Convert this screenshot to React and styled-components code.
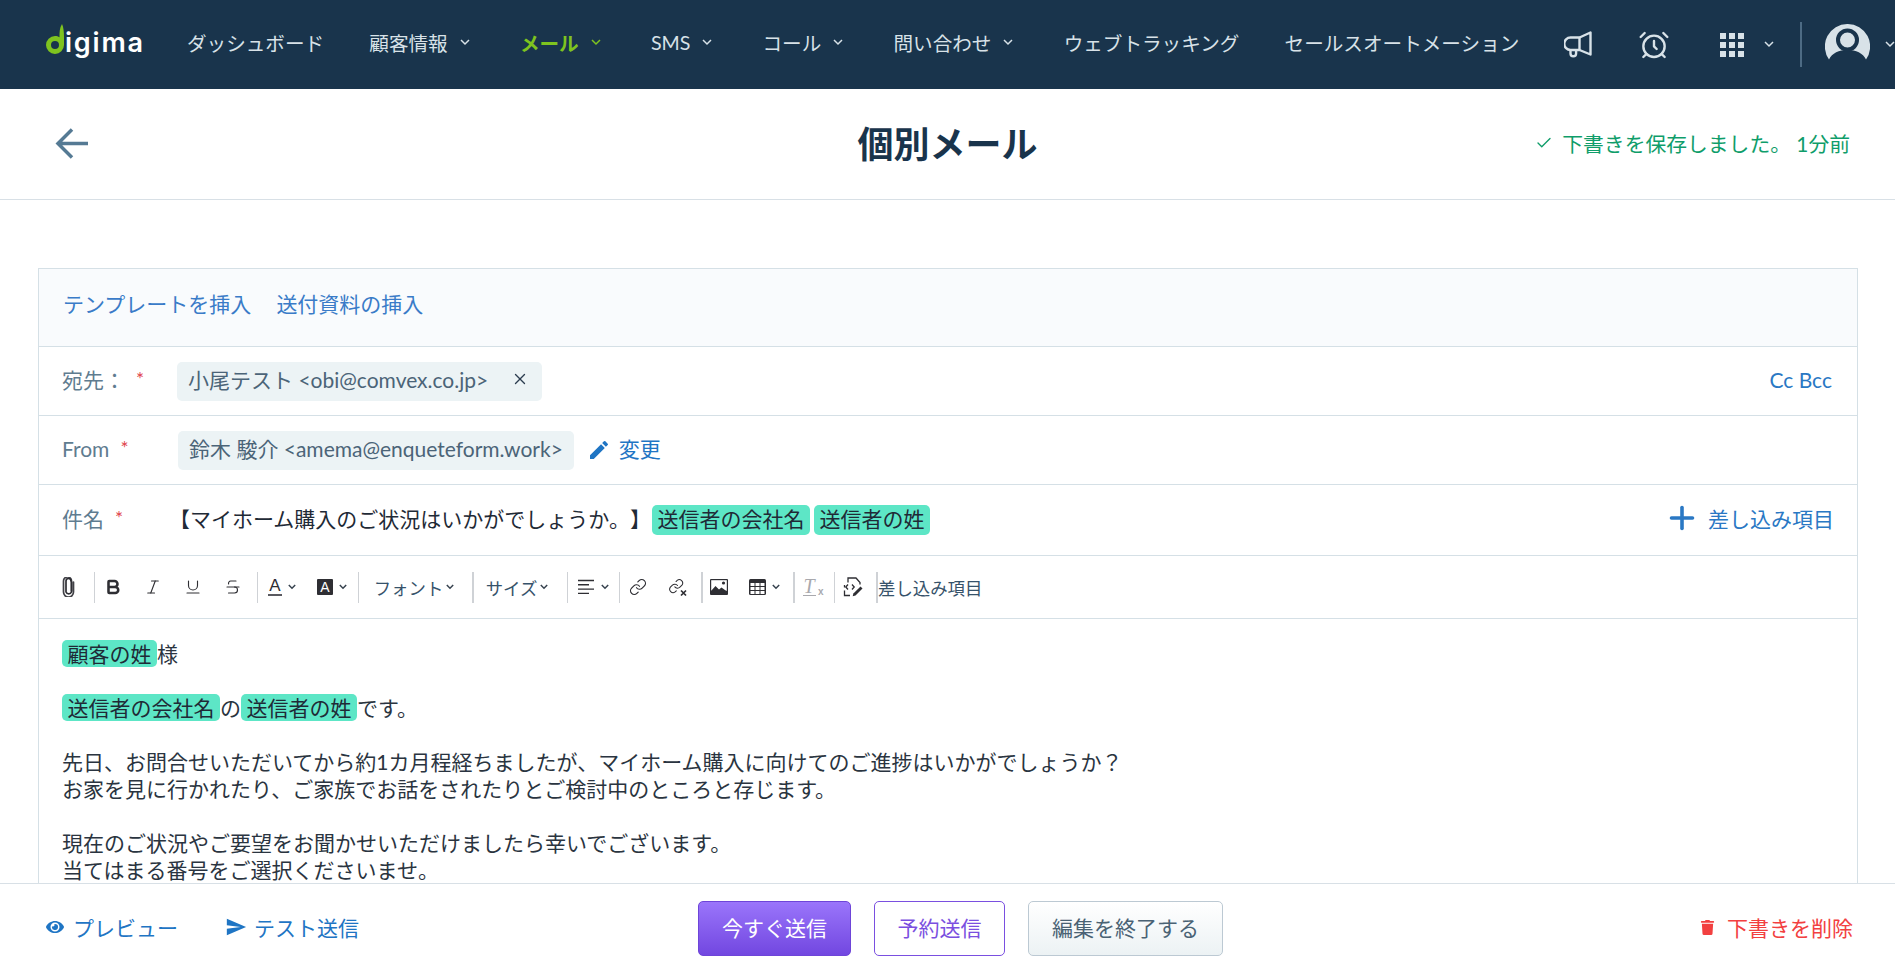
import React from "react";
import styled, { createGlobalStyle } from "styled-components";
import { AlarmClock, Check, X, Plus, Bold, Italic, Underline, Strikethrough, Link as LinkIcon } from "lucide-react";
import { FaEye, FaTrash } from "react-icons/fa";
import { MdSend, MdEdit } from "react-icons/md";

const Global = createGlobalStyle`
  html, body { margin: 0; padding: 0; height: 100%; overflow: hidden; background: #fff; }
  body { font-family: Lato, "Noto Sans CJK JP", sans-serif; text-spacing-trim: space-all; }
  * { box-sizing: border-box; }
`;

const Page = styled.div`
  width: 1895px; height: 972px; display: flex; flex-direction: column; overflow: hidden; background: #fff;
`;
const NavBar = styled.header`
  height: 89px; flex-shrink: 0; background: #19344c; display: flex; align-items: center;
  padding-left: 45px; overflow: hidden; color: #d8e2e8; font-size: 19.6px; font-weight: 400;
`;
const NavList = styled.nav`display: flex; align-items: center; gap: 45.2px; margin-left: 44px; padding-bottom: 4px;`;
const NavItem = styled.span`
  display: flex; align-items: center; white-space: nowrap; color: ${p => p.$active ? "#7ec31f" : "#d8e2e8"};
  font-weight: ${p => p.$active ? 700 : 400};
`;
const ChevBox = styled.span`
  width: 20px; flex-shrink: 0; display: flex; justify-content: center; align-items: center; margin-left: ${p => p.$ml ?? 7}px;
`;
const Chevron = ({ color = "#d8e2e8", ml }) => (
  <ChevBox $ml={ml}><svg width="10" height="7" viewBox="0 0 10 7" fill="none" stroke={color} strokeWidth="1.5"><path d="M1 1l4 4 4-4" /></svg></ChevBox>
);
const LogoBox = styled.div`display: flex; align-items: flex-start; width: 98px; height: 36px; flex-shrink: 0; margin-bottom: 5px;`;
const LogoText = styled.span`
  font-family: Inter, Lato, sans-serif; font-weight: 600; font-size: 27px; line-height: 36px; color: #fff; margin-left: 1px; padding-top: 1px; letter-spacing: 1.8px;
`;
const Logo = () => (
  <LogoBox>
    <svg width="19" height="30" viewBox="0 0 19 30" style={{ flexShrink: 0 }}>
      <path fillRule="evenodd" fill="#7ec31f" d="M17 0c1.5 3 2 8 2 13v8a9 9 0 1 1-9-9c2 0 3 .5 4.500 1.200C14.500 8 14.500 4 17 0zM10 17a4 4 0 1 0 0 8 4 4 0 0 0 0-8z" />
    </svg>
    <LogoText>igima</LogoText>
  </LogoBox>
);
const Tools = styled.div`display: flex; align-items: center; margin-left: 45px;`;
const ToolIcon = styled.span`display: flex; margin-left: ${p => p.$ml || 0}px; color: #d8e2e8; flex-shrink: 0;`;
const NavDivider = styled.span`width: 2px; height: 45px; background: #4d6b84; margin-left: 21px; flex-shrink: 0;`;

const PageHead = styled.div`
  flex-shrink: 0; height: 111px; border-bottom: 1px solid #d8e0e6; display: grid; grid-template-columns: 1fr auto 1fr; align-items: center; padding: 0 45px 1px 45px;
`;
const BackArrow = styled.svg`margin-left: 10px;`;
const Title = styled.h1`margin: 0; font-size: 36px; font-weight: 700; color: #19344c; line-height: 1;`;
const Saved = styled.div`
  justify-self: end; display: flex; align-items: center; gap: 9px; color: #0f9d6a; font-size: 20.8px; font-weight: 400; white-space: nowrap; padding-bottom: 2px;
`;

const Main = styled.main`flex: 1; min-height: 0; overflow: hidden; padding: 68px 37px 0 38px;`;
const Card = styled.section`
  height: 100%; border: 1px solid #d5e0e6; border-bottom: 0; display: flex; flex-direction: column; background: #fff;
`;
const TabRow = styled.div`
  height: 78px; flex-shrink: 0; background: #f9fbfd; border-bottom: 1px solid #d5e0e6; display: flex; align-items: center; gap: 25px; padding: 0 0 9px 24px; font-size: 21px; font-weight: 400; color: #3a7bc8;
`;
const Row = styled.div`
  height: ${p => p.$h}px; flex-shrink: 0; border-bottom: 1px solid #d5e0e6; display: flex; align-items: center; padding: 0 25px 0 23px; font-size: 21px; font-weight: 400; color: #4b6478;
`;
const Label = styled.div`width: 115px; flex-shrink: 0; color: #5f7c90; white-space: nowrap; padding-bottom: 4px;`;
const Star = styled.span`color: #e0424a; margin-left: 11px; font-size: 19px; position: relative; top: -2px;`;
const Chip = styled.div`
  height: 39px; display: flex; align-items: center; padding: 0 ${p => p.$pr ?? 11}px 4px 11px; background: #ecf3f5; border-radius: 5px; color: #4b6478; white-space: nowrap; margin-left: ${p => p.$ml || 0}px;
`;
const ChipClose = styled.span`display: flex; margin-left: 23px; color: #2b3d4f;`;
const ActionLink = styled.span`
  display: flex; align-items: center; color: #1f75c4; white-space: nowrap; margin-left: ${p => p.$ml || 0}px; padding-bottom: ${p => p.$pb || 0}px;
`;
const RightLink = styled(ActionLink)`margin-left: auto; color: #2a78c4; gap: ${p => p.$gap || 0}px; padding-bottom: 4px; margin-right: ${p => p.$mr || 0}px;`;
const SubjectText = styled.span`color: #1f2a36; white-space: nowrap; margin-left: -8px; padding-bottom: 4px;`;
const SubjectPills = styled.span`display: flex; gap: 4px; margin-left: 1px;`;
const Pill = styled.span`
  display: inline-block; background: #5de6c6; color: #1f2a36; padding: 0 5.5px ${p => p.$pb || 0}px; border-radius: 5px; line-height: ${p => p.$lh || 27}px; vertical-align: top;
`;

const Toolbar = styled.div`
  height: 63px; flex-shrink: 0; border-bottom: 1px solid #d5e0e6; display: flex; align-items: center; padding-left: 6px; color: #2e2e33;
`;
const Tool = styled.span`
  width: ${p => p.$w}px; flex-shrink: 0; height: 31px; display: flex; align-items: center; justify-content: center; gap: ${p => p.$gap ?? 6}px; color: #2e2e33;
`;
const ToolText = styled.span`font-size: 17.4px; color: #36526a; font-weight: 400; white-space: nowrap;`;
const Sep = styled.span`
  width: ${p => p.$w || 1}px; height: 31px; flex-shrink: 0; background: #cfd2d6; margin-left: ${p => p.$ml || 0}px;
`;
const ColorA = styled.span`
  display: flex; flex-direction: column; align-items: center; font-family: "Liberation Sans", sans-serif; font-size: 17px; line-height: 16px; color: #2e2e33; width: 14px; border-bottom: 2px solid #5a5a60;
`;
const BoxA = styled.span`
  display: flex; align-items: center; justify-content: center; width: 16px; height: 16px; background: #2e2e33; color: #fff; font-family: "Liberation Sans", sans-serif; font-size: 14px; border-radius: 1px;
`;
const ClearF = styled.span`
  position: relative; font-family: "Liberation Serif", serif; font-style: italic; font-size: 20px; line-height: 17px; border-bottom: 1px solid #a9a9ae; color: #a9a9ae; width: 13px; text-align: center; margin-right: 6px;
`;
const ClearX = styled.span`
  position: absolute; right: -8px; bottom: -2px; font: 700 10px "Liberation Sans", sans-serif; color: #a9a9ae; font-style: normal;
`;
const TbChev = () => (
  <svg width="8" height="6" viewBox="0 0 8 6" fill="none" stroke="#36424e" strokeWidth="1.500"><path d="M.8 1l3.200 3.200L7.200 1" /></svg>
);

const Editor = styled.div`
  flex: 1; min-height: 0; overflow: hidden; padding: 21px 23px 0; font-size: 21px; font-weight: 400; line-height: 27px; color: #2a3440;
`;
const Line = styled.p`margin: 0 0 ${p => p.$gap ? "27px" : "0"}; white-space: nowrap;`;

const Footer = styled.footer`
  height: 89px; flex-shrink: 0; border-top: 1px solid #d8e0e6; display: flex; align-items: center; padding: 0 42px 0 46px; font-size: 21px; font-weight: 400; background: #fff;
`;
const FootLeft = styled.div`width: 652px; display: flex; align-items: center; gap: 47px; color: #1f75c4; padding-bottom: 2px;`;
const FootLink = styled.span`display: flex; align-items: center; gap: ${p => p.$gap}px; white-space: nowrap;`;
const FootCenter = styled.div`display: flex; gap: 23px;`;
const Btn = styled.button`
  font: inherit; font-size: 21px; height: 55px; width: ${p => p.$w}px; border-radius: 5px; padding: 0 0 3px; cursor: pointer; white-space: nowrap;
  ${p => p.$kind === "primary" && "color:#fff;background:linear-gradient(#9a75fb,#7247e0);border:1px solid #6e45d8;"}
  ${p => p.$kind === "outline" && "color:#7a4fe0;background:#fff;border:1px solid #7a4fe0;"}
  ${p => p.$kind === "plain" && "color:#4a6274;background:linear-gradient(#fff,#ecf2f4);border:1px solid #bcc9d3;"}
`;
const FootDelete = styled.div`margin-left: auto; display: flex; align-items: center; gap: 12px; color: #f24040; white-space: nowrap; padding-bottom: 2px;`;

const Megaphone = () => (
  <svg width="28" height="27" viewBox="0 0 28 27" fill="none" stroke="currentColor" strokeWidth="2.4" strokeLinejoin="round">
    <path d="M26.500 1.500v22l-11-4.500H6.500a5 5 0 0 1 0-12.500h9z" />
    <path d="M15.500 6.500v12.500" />
    <path d="M6.500 19v3.500a2.800 2.800 0 0 0 5.600 0V19" />
  </svg>
);
const Grid9 = () => (
  <svg width="24" height="24" viewBox="0 0 24 24" fill="currentColor">
    {[0, 9, 18].map(y => [0, 9, 18].map(x => <rect key={`${x}-${y}`} x={x} y={y} width="6" height="6" />))}
  </svg>
);
const Avatar = () => (
  <svg width="45" height="42" viewBox="0 0 45 42">
    <path fill="#d8e2e8" d="M22.500 0A22.500 22.500 0 0 0 4 35.500C7 29 14 26 22.500 26S38 29 41 35.500A22.500 22.500 0 0 0 22.500 0z" />
    <circle cx="22.500" cy="16" r="9.500" fill="#d8e2e8" stroke="#19344c" strokeWidth="4" />
  </svg>
);
const Clip = () => (
  <svg width="13" height="20" viewBox="0 0 13 20" fill="none" stroke="#2e2e33" strokeWidth="1.700" strokeLinecap="round">
    <path d="M9 5v10a3 3 0 0 1-5.500 0V4a2.500 2.500 0 0 1 5 0" transform="translate(0.500 0)" />
    <path d="M11.500 5v10a5 5 0 0 1-10 0V4a4 4 0 0 1 8 0v10" opacity="0.9" />
  </svg>
);
const AlignIcon = () => (
  <svg width="18" height="16" viewBox="0 0 18 16" stroke="#2e2e33" strokeWidth="1.400">
    <path d="M1 1.500h16M1 5.800h11M1 10.100h16M1 14.400h11" />
  </svg>
);
const Unlink = () => (
  <svg width="20" height="19" viewBox="0 0 20 19" fill="none">
    <g stroke="#2e2e33" strokeWidth="1.500" strokeLinecap="round" transform="scale(.68)">
      <path d="M10 13a5 5 0 0 0 7.500.5l3-3a5 5 0 0 0-7-7l-1.700 1.700" />
      <path d="M14 11a5 5 0 0 0-7.500-.5l-3 3a5 5 0 0 0 7 7l1.700-1.700" />
    </g>
    <path d="M13 12.500l5 5M18 12.500l-5 5" stroke="#2e2e33" strokeWidth="1.700" />
  </svg>
);
const ImageIcon = () => (
  <svg width="18" height="16" viewBox="0 0 18 16">
    <rect width="18" height="16" fill="#2e2e33" rx="1" />
    <rect x="1.200" y="1.200" width="15.600" height="10.600" fill="#fff" />
    <circle cx="13.500" cy="4" r="1.600" fill="#2e2e33" />
    <path d="M1 12l4.500-5 3.500 3.500 2.500-2 5.500 4V15H1z" fill="#2e2e33" />
  </svg>
);
const TableIcon = () => (
  <svg width="17" height="16" viewBox="0 0 17 16">
    <rect width="17" height="16" rx="1.500" fill="#2e2e33" />
    <g fill="#fff">
      {[4, 8, 12].map(y => [1.500, 6.500, 11.500].map(x => <rect key={`${x}-${y}`} x={x} y={y} width="4" height="3" />))}
    </g>
  </svg>
);
const CodeEdit = () => (
  <svg width="20" height="20" viewBox="0 0 20 20" fill="none" stroke="#2e2e33" strokeWidth="1.300">
    <path d="M5 5.500V1h8l4 4.500v2M1.500 13.500v5H7M1.500 8v2.500" />
    <path d="M5 7.500L2.800 10 5 12.500M9 7.500L11.200 10 9 12.500" />
    <path d="M17.500 9.500l2 2-7 7-2.800.7.700-2.700z" fill="#2e2e33" stroke="none" />
  </svg>
);

export default function App() {
  return (
    <Page>
      <Global />
      <NavBar>
        <Logo />
        <NavList>
          <NavItem>ダッシュボード</NavItem>
          <NavItem>顧客情報<Chevron /></NavItem>
          <NavItem $active>メール<Chevron color="#7ec31f" /></NavItem>
          <NavItem>SMS<Chevron /></NavItem>
          <NavItem>コール<Chevron /></NavItem>
          <NavItem>問い合わせ<Chevron /></NavItem>
          <NavItem>ウェブトラッキング</NavItem>
          <NavItem>セールスオートメーション</NavItem>
        </NavList>
        <Tools>
          <ToolIcon><Megaphone /></ToolIcon>
          <ToolIcon $ml={46}><AlarmClock size={32} strokeWidth={1.8} /></ToolIcon>
          <ToolIcon $ml={50}><Grid9 /></ToolIcon>
          <Chevron ml={15} />
          <NavDivider />
          <ToolIcon $ml={23}><Avatar /></ToolIcon>
          <Chevron ml={10} />
        </Tools>
      </NavBar>

      <PageHead>
        <BackArrow width="33" height="31" viewBox="0 0 33 31" fill="none" stroke="#557a94" strokeWidth="3.500">
          <path d="M33 15.500H3M17 1.500L3 15.500l14 14" />
        </BackArrow>
        <Title>個別メール</Title>
        <Saved><Check size={18} strokeWidth={1.8} />下書きを保存しました。 1分前</Saved>
      </PageHead>

      <Main>
        <Card>
          <TabRow><span>テンプレートを挿入</span><span>送付資料の挿入</span></TabRow>
          <Row $h={69}>
            <Label>宛先：<Star>*</Star></Label>
            <Chip $pr={13}>小尾テスト &lt;obi@comvex.co.jp&gt;<ChipClose><X size={18} strokeWidth={1.8} /></ChipClose></Chip>
            <RightLink>Cc Bcc</RightLink>
          </Row>
          <Row $h={69}>
            <Label>From<Star>*</Star></Label>
            <Chip $ml={1}>鈴木 駿介 &lt;amema@enqueteform.work&gt;</Chip>
            <ActionLink $ml={13}><MdEdit size={24} /></ActionLink>
            <ActionLink $ml={8} $pb={4}>変更</ActionLink>
          </Row>
          <Row $h={71}>
            <Label>件名<Star>*</Star></Label>
            <SubjectText>【マイホーム購入のご状況はいかがでしょうか。】</SubjectText>
            <SubjectPills>
              <Pill $lh={27} $pb={3}>送信者の会社名</Pill>
              <Pill $lh={27} $pb={3}>送信者の姓</Pill>
            </SubjectPills>
            <RightLink $gap={8} $mr={-2}><Plus size={36} strokeWidth={2.4} />差し込み項目</RightLink>
          </Row>
          <Toolbar>
            <Tool $w={46}><Clip /></Tool>
            <Sep $ml={3} />
            <Tool $w={36}><Bold size={18} strokeWidth={3.4} /></Tool>
            <Tool $w={44}><Italic size={18} strokeWidth={1.5} /></Tool>
            <Tool $w={36}><Underline size={18} strokeWidth={1.5} /></Tool>
            <Tool $w={44}><Strikethrough size={18} strokeWidth={1.5} /></Tool>
            <Sep $ml={2} />
            <Tool $w={48}><ColorA>A</ColorA><TbChev /></Tool>
            <Tool $w={52}><BoxA>A</BoxA><TbChev /></Tool>
            <Sep />
            <Tool $w={110} $gap={3}><ToolText>フォント</ToolText><TbChev /></Tool>
            <Sep $w={2} $ml={3} />
            <Tool $w={86} $gap={3}><ToolText>サイズ</ToolText><TbChev /></Tool>
            <Sep $ml={7} />
            <Tool $w={50}><AlignIcon /><TbChev /></Tool>
            <Sep $ml={1} />
            <Tool $w={36}><LinkIcon size={18} strokeWidth={1.6} /></Tool>
            <Tool $w={44}><Unlink /></Tool>
            <Sep $w={2} $ml={1} />
            <Tool $w={32}><ImageIcon /></Tool>
            <Tool $w={58}><TableIcon /><TbChev /></Tool>
            <Sep $w={2} />
            <Tool $w={34}><ClearF>T<ClearX>x</ClearX></ClearF></Tool>
            <Sep $ml={5} />
            <Tool $w={36}><CodeEdit /></Tool>
            <Sep $w={2} $ml={5} />
            <ToolText>差し込み項目</ToolText>
          </Toolbar>
          <Editor>
            <Line $gap><Pill>顧客の姓</Pill>様</Line>
            <Line $gap><Pill>送信者の会社名</Pill>の<Pill>送信者の姓</Pill>です。</Line>
            <Line>先日、お問合せいただいてから約1カ月程経ちましたが、マイホーム購入に向けてのご進捗はいかがでしょうか？</Line>
            <Line $gap>お家を見に行かれたり、ご家族でお話をされたりとご検討中のところと存じます。</Line>
            <Line>現在のご状況やご要望をお聞かせいただけましたら幸いでございます。</Line>
            <Line>当てはまる番号をご選択くださいませ。</Line>
          </Editor>
        </Card>
      </Main>

      <Footer>
        <FootLeft>
          <FootLink $gap={9}><FaEye size={18} />プレビュー</FootLink>
          <FootLink $gap={7}><MdSend size={22} />テスト送信</FootLink>
        </FootLeft>
        <FootCenter>
          <Btn $kind="primary" $w={153}>今すぐ送信</Btn>
          <Btn $kind="outline" $w={131}>予約送信</Btn>
          <Btn $kind="plain" $w={195}>編集を終了する</Btn>
        </FootCenter>
        <FootDelete><FaTrash size={15} />下書きを削除</FootDelete>
      </Footer>
    </Page>
  );
}
